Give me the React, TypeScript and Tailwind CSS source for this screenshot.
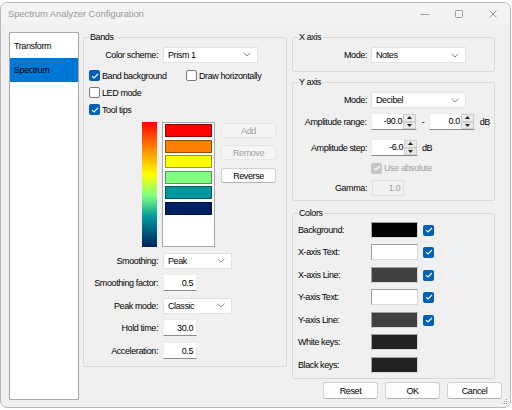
import React from 'react';

// Win11-style WinForms dialog: Spectrum Analyzer Configuration

const Chevron = () => (
  <svg width="8" height="5" viewBox="0 0 8 5" className="shrink-0">
    <path d="M0.5 0.8 L4 4 L7.5 0.8" stroke="#8a8a8a" strokeWidth="1" fill="none" />
  </svg>
);

const CheckBox = ({ checked = false, disabled = false }: { checked?: boolean; disabled?: boolean }) => {
  if (!checked) {
    return <span className="w-[11px] h-[11px] rounded-[2px] border border-[#7a7a7a] bg-white shrink-0" />;
  }
  return (
    <span
      className={`w-[11px] h-[11px] rounded-[2px] flex items-center justify-center shrink-0 ${
        disabled ? 'bg-[#c6c6c6]' : 'bg-[#005fb8]'
      }`}
    >
      <svg width="8" height="6" viewBox="0 0 8 6">
        <path d="M1 3.1 L3 5 L7 1" stroke="white" strokeWidth="1.1" fill="none" />
      </svg>
    </span>
  );
};

const Combo = ({ value, className }: { value: string; className: string }) => (
  <div className={`h-[16px] bg-white border border-[#e2e2e2] flex items-center justify-between pl-[4px] pr-[6px] ${className}`}>
    <span>{value}</span>
    <Chevron />
  </div>
);

const Edit = ({ value, className }: { value: string; className: string }) => (
  <div className={`h-[17px] bg-white border border-[#ececec] border-b-[#8c8c8c] flex items-center justify-end pr-[3px] ${className}`}>
    {value}
  </div>
);

const Arrow = ({ up }: { up?: boolean }) => (
  <span className="flex-1 bg-[#e9e9e9] border border-[#cfcfcf] flex items-center justify-center">
    <svg width="5" height="3" viewBox="0 0 5 3">
      <path d={up ? 'M0 3 L2.5 0 L5 3 Z' : 'M0 0 L2.5 3 L5 0 Z'} fill="#222" />
    </svg>
  </span>
);

const Spin = ({ value, className }: { value: string; className: string }) => (
  <div className={`h-[17px] bg-white border border-[#ececec] border-b-[#8c8c8c] flex ${className}`}>
    <span className="flex-1 text-right pr-[1px] leading-[15px]">{value}</span>
    <div className="w-[13px] flex flex-col">
      <Arrow up />
      <Arrow />
    </div>
  </div>
);

const Button = ({ label, disabled = false, className = '' }: { label: string; disabled?: boolean; className?: string }) => (
  <div
    className={`rounded-[3px] border flex items-center justify-center ${
      disabled
        ? 'bg-[#f5f5f5] border-[#e5e5e5] text-[#a0a0a0]'
        : 'bg-[#fdfdfd] border-[#d0d0d0] border-b-[#b4b4b4] text-black'
    } ${className}`}
  >
    {label}
  </div>
);

const swatches = ['bg-[#ff0000]', 'bg-[#ff8000]', 'bg-[#ffff00]', 'bg-[#80ff80]', 'bg-[#00979c]', 'bg-[#002060]'];

const colorRows: { label: string; swatch: string; check: boolean; mt: string }[] = [
  { label: 'Background:', swatch: 'bg-black', check: true, mt: 'mt-[2px]' },
  { label: 'X-axis Text:', swatch: 'bg-white', check: true, mt: 'mt-[6px]' },
  { label: 'X-axis Line:', swatch: 'bg-[#404040]', check: true, mt: 'mt-[7px]' },
  { label: 'Y-axis Text:', swatch: 'bg-white', check: true, mt: 'mt-[6px]' },
  { label: 'Y-axis Line:', swatch: 'bg-[#404040]', check: true, mt: 'mt-[7px]' },
  { label: 'White keys:', swatch: 'bg-[#222222]', check: false, mt: 'mt-[6px]' },
  { label: 'Black keys:', swatch: 'bg-[#222222]', check: false, mt: 'mt-[7px]' },
];

export default function App() {
  return (
    <div className="w-[512px] h-[410px] bg-white overflow-hidden pt-[2px] text-[9px] leading-[12px] tracking-[-0.4px] whitespace-nowrap text-black font-['Liberation_Sans',sans-serif]">
      <div className="relative w-[511px] h-[406px] bg-[#f0f0f0] border border-[#b9b9b9] rounded-[7px] flex flex-col overflow-hidden">
        {/* title bar */}
        <div className="h-[22px] shrink-0 bg-[#f3f3f3] flex items-center">
          <span className="pl-[7px] flex-1 text-[9.5px] tracking-[-0.1px] text-[#9a9a9a]">
            Spectrum Analyzer Configuration
          </span>
          <div className="w-[34px] h-full flex items-center justify-center">
            <svg width="10" height="10" viewBox="0 0 10 10">
              <path d="M0.5 5.5 H9.5" stroke="#9a9a9a" strokeWidth="1" />
            </svg>
          </div>
          <div className="w-[34px] h-full flex items-center justify-center">
            <svg width="10" height="10" viewBox="0 0 10 10">
              <rect x="1.5" y="1.5" width="7" height="7" rx="1" stroke="#9a9a9a" strokeWidth="1" fill="none" />
            </svg>
          </div>
          <div className="w-[34px] h-full flex items-center justify-center">
            <svg width="10" height="10" viewBox="0 0 10 10">
              <path d="M1.5 1.5 L8.5 8.5 M8.5 1.5 L1.5 8.5" stroke="#9a9a9a" strokeWidth="1" />
            </svg>
          </div>
        </div>

        {/* client area */}
        <div className="flex pl-[8px] pt-[6px]">
          {/* page list */}
          <div className="mt-[1px] w-[70px] h-[368px] bg-white border border-[#a9a9a9] pt-[1px] shrink-0">
            <div className="h-[24px] flex items-center pl-[4px]">Transform</div>
            <div className="h-[24px] flex items-center pl-[4px] bg-[#0078d7]">Spectrum</div>
          </div>

          <div className="ml-[4px] w-[420px] flex flex-col">
            <div className="flex gap-[5px]">
              {/* Bands */}
              <fieldset className="w-[204px] h-[336px] border border-[#d9d9d9] rounded-[2px] pl-[5px] pr-[4px] min-w-0 shrink-0">
                <legend className="px-[1px] leading-[13px]">Bands</legend>
                <div className="mt-[2px] h-[17px] flex items-center">
                  <span className="w-[69px] text-right">Color scheme:</span>
                  <Combo value="Prism 1" className="ml-[5px] w-[95px]" />
                </div>
                <div className="mt-[4px] h-[17px] flex items-center">
                  <div className="w-[97px] flex items-center gap-[2px]">
                    <CheckBox checked />
                    <span>Band background</span>
                  </div>
                  <div className="flex items-center gap-[2px]">
                    <CheckBox />
                    <span>Draw horizontally</span>
                  </div>
                </div>
                <div className="h-[17px] flex items-center gap-[2px]">
                  <CheckBox />
                  <span>LED mode</span>
                </div>
                <div className="h-[17px] flex items-center gap-[2px]">
                  <CheckBox checked />
                  <span>Tool tips</span>
                </div>

                <div className="mt-[4px] h-[125px] flex">
                  <div className="ml-[53px] w-[15px] h-full bg-[linear-gradient(to_bottom,#ff0000_0%,#ff8000_20%,#ffff00_42%,#80ff80_59%,#00979c_76%,#002060_100%)]" />
                  <div className="ml-[5px] w-[53px] h-full bg-white border border-[#a9a9a9] px-[2px] pt-[1px] flex flex-col gap-[2.5px]">
                    {swatches.map((s) => (
                      <div key={s} className={`h-[13px] border border-black/40 ${s}`} />
                    ))}
                  </div>
                  <div className="ml-[6px] w-[55px] flex flex-col">
                    <Button label="Add" disabled className="mt-[1px] h-[15px]" />
                    <Button label="Remove" disabled className="mt-[7px] h-[15px]" />
                    <Button label="Reverse" className="mt-[8px] h-[15px]" />
                  </div>
                </div>

                <div className="mt-[5px] h-[17px] flex items-center">
                  <span className="w-[69px] text-right">Smoothing:</span>
                  <Combo value="Peak" className="ml-[5px] w-[69px]" />
                </div>
                <div className="mt-[5px] h-[17px] flex items-center">
                  <span className="w-[69px] text-right">Smoothing factor:</span>
                  <Edit value="0.5" className="ml-[5px] w-[34px]" />
                </div>
                <div className="mt-[6px] h-[17px] flex items-center">
                  <span className="w-[69px] text-right">Peak mode:</span>
                  <Combo value="Classic" className="ml-[5px] w-[69px]" />
                </div>
                <div className="mt-[5px] h-[17px] flex items-center">
                  <span className="w-[69px] text-right">Hold time:</span>
                  <Edit value="30.0" className="ml-[5px] w-[34px]" />
                </div>
                <div className="mt-[6px] h-[17px] flex items-center">
                  <span className="w-[69px] text-right">Acceleration:</span>
                  <Edit value="0.5" className="ml-[5px] w-[34px]" />
                </div>
              </fieldset>

              {/* right column */}
              <div className="w-[203px] flex flex-col">
                <fieldset className="h-[41px] border border-[#d9d9d9] rounded-[2px] pl-[5px] pr-[4px] min-w-0">
                  <legend className="px-[1px] leading-[13px]">X axis</legend>
                  <div className="mt-[3px] h-[16px] flex items-center">
                    <span className="w-[69px] text-right">Mode:</span>
                    <Combo value="Notes" className="ml-[4px] w-[95px]" />
                  </div>
                </fieldset>

                <fieldset className="mt-[4px] h-[125px] border border-[#d9d9d9] rounded-[2px] pl-[5px] pr-[4px] min-w-0">
                  <legend className="px-[1px] leading-[13px]">Y axis</legend>
                  <div className="mt-[3px] h-[16px] flex items-center">
                    <span className="w-[69px] text-right">Mode:</span>
                    <Combo value="Decibel" className="ml-[4px] w-[95px]" />
                  </div>
                  <div className="mt-[5px] h-[17px] flex items-center">
                    <span className="w-[69px] text-right">Amplitude range:</span>
                    <Spin value="-90.0" className="ml-[4px] w-[47px]" />
                    <span className="w-[12px] text-center">-</span>
                    <Spin value="0.0" className="w-[46px]" />
                    <span className="ml-[5px]">dB</span>
                  </div>
                  <div className="mt-[9px] h-[17px] flex items-center">
                    <span className="w-[69px] text-right">Amplitude step:</span>
                    <Spin value="-6.0" className="ml-[4px] w-[47px]" />
                    <span className="ml-[4px]">dB</span>
                  </div>
                  <div className="mt-[3px] h-[18px] flex items-center gap-[2px] pl-[73px] text-[#a0a0a0]">
                    <CheckBox checked disabled />
                    <span>Use absolute</span>
                  </div>
                  <div className="mt-[3px] h-[16px] flex items-center">
                    <span className="w-[69px] text-right">Gamma:</span>
                    <div className="ml-[5px] w-[32px] h-[16px] border border-[#dedede] bg-[#f0f0f0] text-[#a0a0a0] flex items-center justify-end pr-[3px]">
                      1.0
                    </div>
                  </div>
                </fieldset>

                <fieldset className="mt-[6px] h-[172px] border border-[#d9d9d9] rounded-[2px] pl-[5px] pr-[4px] min-w-0 overflow-hidden">
                  <legend className="px-[1px] leading-[13px]">Colors</legend>
                  {colorRows.map((r) => (
                    <div key={r.label} className={`${r.mt} h-[16px] flex items-center`}>
                      <span className="w-[73px]">{r.label}</span>
                      <div className={`w-[47px] h-[16px] border border-[#a0a0a0] border-b-[#d8d8d8] border-r-[#d8d8d8] ${r.swatch}`} />
                      {r.check && (
                        <span className="ml-[5px] flex">
                          <CheckBox checked />
                        </span>
                      )}
                    </div>
                  ))}
                </fieldset>
              </div>
            </div>

            <div className="mt-[3px] h-[17px] flex justify-end gap-[7px] pr-[1px]">
              <Button label="Reset" className="w-[55px] h-full" />
              <Button label="OK" className="w-[55px] h-full" />
              <Button label="Cancel" className="w-[55px] h-full" />
            </div>
          </div>
        </div>

        {/* size grip */}
        <svg width="7" height="7" viewBox="0 0 7 7" className="absolute right-[2px] bottom-[2px]">
          <rect x="5" y="1" width="1" height="1" fill="#9a9a9a" />
          <rect x="3" y="3" width="1" height="1" fill="#9a9a9a" />
          <rect x="5" y="3" width="1" height="1" fill="#9a9a9a" />
          <rect x="1" y="5" width="1" height="1" fill="#9a9a9a" />
          <rect x="3" y="5" width="1" height="1" fill="#9a9a9a" />
          <rect x="5" y="5" width="1" height="1" fill="#9a9a9a" />
        </svg>
      </div>
    </div>
  );
}
